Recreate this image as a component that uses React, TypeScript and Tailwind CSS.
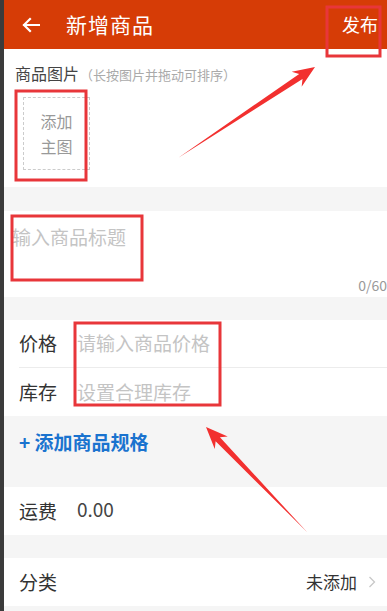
import React from 'react';

const font = { fontFamily: '"Noto Sans CJK SC", "Noto Sans", sans-serif' };

function arrowPoints(tx: number, ty: number, px: number, py: number) {
  const dx = px - tx;
  const dy = py - ty;
  const len = Math.hypot(dx, dy);
  const ux = dx / len;
  const uy = dy / len;
  const nx = -uy;
  const ny = ux;
  const headLen = 22;
  const headHalf = 9;
  const shaftHalf = 3;
  const bx = px - ux * headLen;
  const by = py - uy * headLen;
  const nbx = px - ux * (headLen - 5);
  const nby = py - uy * (headLen - 5);
  const pts = [
    [tx, ty],
    [nbx + nx * shaftHalf, nby + ny * shaftHalf],
    [bx + nx * headHalf, by + ny * headHalf],
    [px, py],
    [bx - nx * headHalf, by - ny * headHalf],
    [nbx - nx * shaftHalf, nby - ny * shaftHalf],
  ];
  return pts.map((p) => p.join(',')).join(' ');
}

function Row({ label, children, border }: { label: string; children?: React.ReactNode; border?: boolean }) {
  return (
    <div className="pl-[15px]">
      <div className={`flex items-center h-[48px] ${border ? 'border-b border-[#ececec]' : ''}`}>
        <span className="text-[19px] text-[#333] w-[58px]">{label}</span>
        {children}
      </div>
    </div>
  );
}

export default function App() {
  return (
    <div className="relative w-[387px] h-[611px] overflow-hidden flex bg-[#f5f5f5]" style={font}>
      <div className="w-[4px] bg-[#3b3b3b] shrink-0" />
      <div className="flex-1 flex flex-col">
        <header className="h-[49px] bg-[#d63c06] flex items-center text-white">
          <svg width="18" height="16" viewBox="0 0 18 16" className="ml-[18px]" fill="none" stroke="white" strokeWidth="2.2" strokeLinecap="square">
            <path d="M2 8h15M8 2L2 8l6 6" />
          </svg>
          <span className="ml-[26px] text-[21px] tracking-[1px]">新增商品</span>
          <span className="ml-auto mr-[9px] text-[18px]">发布</span>
        </header>

        <section className="h-[138px] bg-white pl-[11px] pt-[12px]">
          <div className="flex items-baseline">
            <span className="text-[16px] text-[#444]">商品图片</span>
            <span className="text-[13px] text-[#aaa] ml-[1px]">（长按图片并拖动可排序）</span>
          </div>
          <div className="mt-[12px] ml-[8px] w-[67px] h-[73px] border border-dashed border-[#ccc] flex flex-col items-center justify-center text-[16px] leading-[25px] text-[#999]">
            <span>添加</span>
            <span>主图</span>
          </div>
        </section>

        <div className="h-[24px]" />

        <section className="h-[86px] bg-white relative pl-[8px] pt-[12px]">
          <span className="text-[19px] text-[#c4c4c4]">输入商品标题</span>
          <span className="absolute right-0 bottom-[1px] text-[14px] text-[#999]">0/60</span>
        </section>

        <div className="h-[23px]" />

        <section className="bg-white">
          <Row label="价格" border>
            <span className="text-[19px] text-[#c4c4c4]">请输入商品价格</span>
          </Row>
          <Row label="库存">
            <span className="text-[19px] text-[#c4c4c4]">设置合理库存</span>
          </Row>
        </section>

        <div className="h-[71px] pl-[15px] pt-[12px]">
          <span className="text-[19px] font-semibold text-[#1a73cf]">+ 添加商品规格</span>
        </div>

        <section className="bg-white">
          <Row label="运费">
            <span className="text-[19px] text-[#444] -translate-y-[2px]">0.00</span>
          </Row>
        </section>

        <div className="h-[23px]" />

        <section className="bg-white">
          <Row label="分类">
            <span className="ml-auto text-[17px] text-[#333]">未添加</span>
            <svg width="8" height="12" viewBox="0 0 8 12" className="ml-[11px] mr-[11px]" fill="none" stroke="#c8c8c8" strokeWidth="1.3">
              <path d="M1.5 1l5 5-5 5" />
            </svg>
          </Row>
        </section>
      </div>

      <svg className="absolute inset-0 pointer-events-none" width="387" height="611">
        <g fill="none" stroke="#e8363a" strokeWidth="3">
          <rect x="327" y="7" width="53" height="49" />
          <rect x="16" y="91" width="70" height="89" />
          <rect x="12" y="216" width="130" height="64" />
          <rect x="75" y="323" width="145" height="82" />
        </g>
        <g fill="#f2302f">
          <polygon points={arrowPoints(178, 158, 315, 67)} />
          <polygon points={arrowPoints(307, 532, 206, 427)} />
        </g>
      </svg>
    </div>
  );
}
